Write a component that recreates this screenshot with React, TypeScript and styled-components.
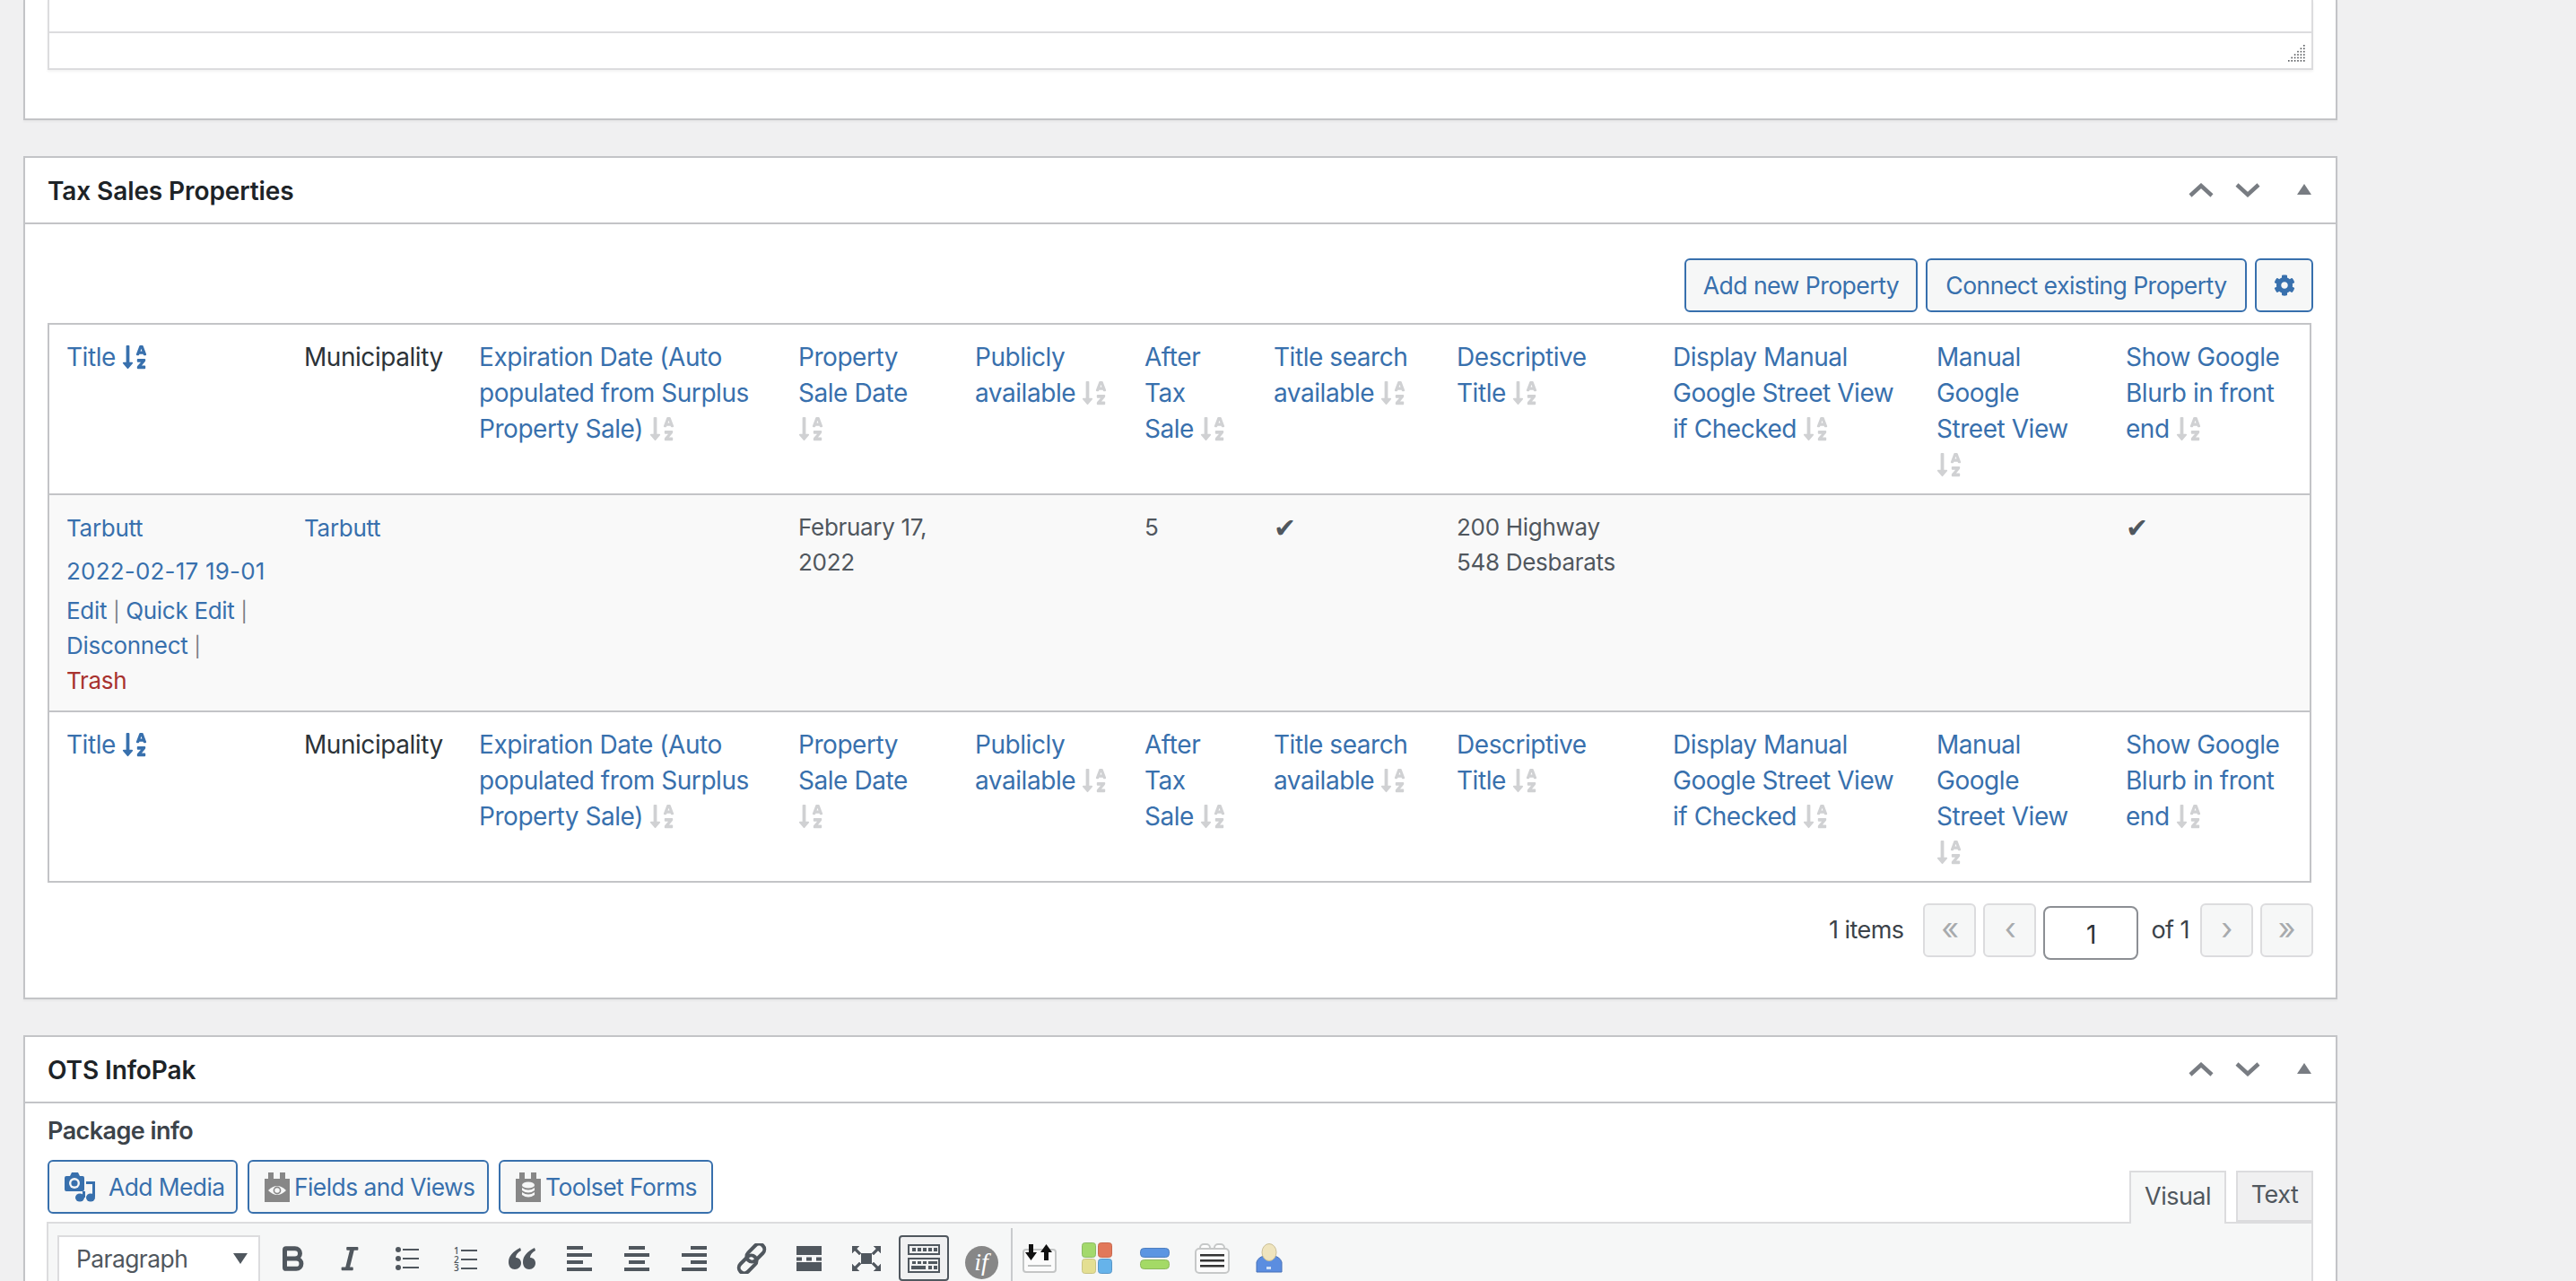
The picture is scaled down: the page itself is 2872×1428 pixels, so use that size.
import React from "react"
import styled, { createGlobalStyle } from "styled-components"
import { FaCog, FaItalic, FaSortAlphaDown } from "react-icons/fa"
import { Bold } from "lucide-react"

const BLUE = "#3870ad"
const FONT = `Inter, "Liberation Sans", sans-serif`

const Global = createGlobalStyle`
  html, body { margin: 0; padding: 0; background: #f0f0f1; overflow: hidden; }
  * { box-sizing: border-box; }
`

const Page = styled.div`
  width: 2872px;
  height: 1428px;
  overflow: hidden;
  padding-left: 26px;
  font-family: ${FONT};
  font-size: 26px;
  letter-spacing: -0.55px;
  color: #3c434a;
`
const Postbox = styled.section<{ $clipped?: boolean }>`
  width: 2580px;
  background: #fff;
  border: 2px solid #c3c4c7;
  border-top-width: ${(p) => (p.$clipped ? 0 : "2px")};
  box-shadow: 0 2px 2px rgba(0, 0, 0, 0.04);
  margin-bottom: 40px;
`
const BoxHeader = styled.header`
  height: 74px;
  display: flex;
  align-items: center;
  padding: 0 27px 0 25px;
  border-bottom: 2px solid #c3c4c7;
`
const BoxTitle = styled.h2`
  flex: 1;
  margin: 0;
  padding-top: 2px;
  font-size: 28px;
  font-weight: 600;
  letter-spacing: -0.1px;
  color: #1d2327;
`
const BoxControl = styled.svg<{ $gap: number }>`
  margin-left: ${(p) => p.$gap}px;
  display: block;
`
const BoxBody = styled.div`
  padding: 0 25px;
`

/* first box, only the bottom of the old editor is visible */
const OldEditor = styled.div`
  margin-bottom: 54px;
  border: 2px solid #dcdcde;
  border-top: 0;
  box-shadow: 0 2px 3px rgba(0, 0, 0, 0.05);
`
const OldEditorArea = styled.div`
  height: 37px;
  border-bottom: 2px solid #dcdcde;
`
const OldEditorStatus = styled.div`
  height: 39px;
  display: flex;
  justify-content: flex-end;
  align-items: flex-end;
  padding: 0 6px 6px 0;
`

const TopActions = styled.div`
  display: flex;
  justify-content: flex-end;
  gap: 9px;
  padding-top: 38px;
  margin-bottom: 12px;
`
const Button = styled.button<{ $width?: number }>`
  height: 60px;
  width: ${(p) => (p.$width ? `${p.$width}px` : "auto")};
  padding: 0;
  display: inline-flex;
  align-items: center;
  justify-content: center;
  background: #f6f7f7;
  border: 2px solid ${BLUE};
  border-radius: 6px;
  color: ${BLUE};
  font-family: ${FONT};
  font-size: 26.6px;
  letter-spacing: -0.55px;
`

const Table = styled.table`
  width: 2524px;
  table-layout: fixed;
  border-collapse: separate;
  border-spacing: 0;
  border: 2px solid #c3c4c7;
`
const Th = styled.th<{ $plain?: boolean; $foot?: boolean }>`
  padding: 16px 20px 12px 19px;
  text-align: left;
  vertical-align: top;
  font-weight: 400;
  font-size: 28px;
  line-height: 40px;
  letter-spacing: -0.45px;
  color: ${(p) => (p.$plain ? "#2c3338" : BLUE)};
  border-bottom: ${(p) => (p.$foot ? "0" : "2px solid #c3c4c7")};
  border-top: ${(p) => (p.$foot ? "2px solid #c3c4c7" : "0")};
`
const Td = styled.td`
  padding: 16px 20px 14px 19px;
  vertical-align: top;
  background: #f9f9f9;
  font-size: 26px;
  line-height: 39px;
  letter-spacing: -0.3px;
  color: #50575e;
`
const RowLink = styled.a<{ $wide?: boolean }>`
  display: block;
  color: ${BLUE};
  font-size: 26px;
  line-height: 42px;
  letter-spacing: ${(p) => (p.$wide ? "0.2px" : "-0.3px")};
  margin-bottom: ${(p) => (p.$wide ? "3px" : "6px")};
`
const Actions = styled.div`
  font-size: 26px;
  line-height: 39px;
`
const ActionLink = styled.a<{ $danger?: boolean }>`
  color: ${(p) => (p.$danger ? "#a8322f" : BLUE)};
`
const ActionSep = styled.span`
  font-size: 22px;
  line-height: 1;
  color: #787c82;
`
const Check = styled.span`
  font-family: "DejaVu Sans", sans-serif;
  font-size: 30px;
  line-height: 1;
  vertical-align: -2px;
  color: #50575e;
`
const SortIcon = styled(FaSortAlphaDown)<{ $active?: boolean; $ownLine?: boolean }>`
  color: ${(p) => (p.$active ? BLUE : "#d0d1d3")};
  vertical-align: -5px;
  margin-left: ${(p) => (p.$ownLine ? "-1px" : "6px")};
`

const Pager = styled.div`
  display: flex;
  justify-content: flex-end;
  align-items: flex-start;
  margin: 23px 0 42px;
  gap: 8px;
`
const PagerText = styled.span<{ $left: number; $right: number }>`
  line-height: 60px;
  font-size: 27px;
  margin: 0 ${(p) => p.$right}px 0 ${(p) => p.$left}px;
  color: #3c434a;
`
const PageButton = styled.div`
  width: 59px;
  height: 60px;
  display: flex;
  align-items: center;
  justify-content: center;
  padding-bottom: 6px;
  background: #f6f7f7;
  border: 2px solid #dcdcde;
  border-radius: 6px;
  color: #a7aaad;
  font-size: 34px;
`
const CurrentPage = styled.div`
  width: 106px;
  height: 60px;
  margin-top: 3px;
  display: flex;
  align-items: center;
  justify-content: center;
  padding-top: 4px;
  background: #fff;
  border: 2px solid #8c8f94;
  border-radius: 8px;
  color: #2c3338;
  font-size: 28px;
`

const PackageLabel = styled.div`
  height: 63px;
  display: flex;
  align-items: center;
  padding-bottom: 2px;
  font-size: 27px;
  font-weight: 600;
  color: #3c434a;
`
const EditorTools = styled.div`
  display: flex;
  justify-content: space-between;
  height: 69px;
`
const MediaButtons = styled.div`
  display: flex;
  gap: 11px;
`
const MediaButton = styled(Button)<{ $gap: number }>`
  padding: 0 0 0 17px;
  justify-content: flex-start;
  font-size: 26.4px;
  gap: ${(p) => p.$gap}px;
`
const Tabs = styled.div`
  display: flex;
  align-items: flex-end;
  gap: 11px;
  align-self: flex-end;
  margin-bottom: -2px;
  position: relative;
`
const Tab = styled.div<{ $active?: boolean }>`
  height: ${(p) => (p.$active ? 59 : 57)}px;
  margin-bottom: ${(p) => (p.$active ? 0 : "2px")};
  padding: 0 18px 4px;
  display: flex;
  align-items: center;
  justify-content: center;
  width: ${(p) => (p.$active ? 108 : 86)}px;
  background: ${(p) => (p.$active ? "#f6f7f7" : "#f0f0f1")};
  border: 2px solid #dcdcde;
  border-bottom: ${(p) => (p.$active ? 0 : "2px solid #dcdcde")};
  color: #50575e;
  font-size: 27px;
`
const Toolbar = styled.div`
  display: flex;
  align-items: flex-start;
  gap: 8px;
  width: 2527px;
  height: 120px;
  margin-left: -1px;
  padding: 13px 10px;
  background: #f6f7f7;
  border: 2px solid #dcdcde;
`
const FormatSelect = styled.div`
  width: 226px;
  height: 60px;
  display: flex;
  justify-content: space-between;
  align-items: center;
  padding: 0 12px 8px 19px;
  background: #fff;
  border: 2px solid #dcdcde;
  color: #50575e;
  font-size: 26.4px;
`
const SelectArrow = styled.span`
  width: 0;
  height: 0;
  border-left: 8px solid transparent;
  border-right: 8px solid transparent;
  border-top: 12px solid #50575e;
`
const ToolButton = styled.div<{ $active?: boolean }>`
  width: 56px;
  height: 51px;
  flex: none;
  display: flex;
  align-items: center;
  justify-content: center;
  color: #50575e;
  background: ${(p) => (p.$active ? "#f0f0f1" : "transparent")};
  border: 2px solid ${(p) => (p.$active ? "#50575e" : "transparent")};
  border-radius: 4px;
`
const ToolSeparator = styled.div`
  width: 2px;
  height: 70px;
  margin: -8px -6px 0 -3px;
  background: #c9cbcd;
  flex: none;
`
const IfBadge = styled.div`
  width: 37px;
  height: 37px;
  margin-top: 9px;
  flex: none;
  display: flex;
  align-items: center;
  justify-content: center;
  border-radius: 50%;
  background: #878787;
  color: #fff;
  font-family: "Liberation Serif", serif;
  font-style: italic;
  font-size: 28px;
  letter-spacing: 0;
`

const UpChevron = () => (
  <BoxControl $gap={0} width="28" height="16" viewBox="0 0 28 16">
    <path d="M2 14 L14 3 L26 14" fill="none" stroke="#787c82" strokeWidth="4.5" />
  </BoxControl>
)
const DownChevron = () => (
  <BoxControl $gap={24} width="28" height="16" viewBox="0 0 28 16">
    <path d="M2 2 L14 13 L26 2" fill="none" stroke="#787c82" strokeWidth="4.5" />
  </BoxControl>
)
const CollapseArrow = () => (
  <BoxControl $gap={41} width="16" height="16" viewBox="0 0 16 16">
    <path d="M8 1 L16 13 L0 13 Z" fill="#787c82" />
  </BoxControl>
)
const BoxControls = () => (
  <>
    <UpChevron />
    <DownChevron />
    <CollapseArrow />
  </>
)

const ResizeGrip = () => (
  <svg width="20" height="20" viewBox="0 0 20 20" fill="#55585c">
    {[0, 1, 2, 3, 4, 5].map((row) =>
      [0, 1, 2, 3, 4, 5].filter((c) => c >= 5 - row).map((c) => (
        <rect key={`${row}-${c}`} x={c * 3.4} y={row * 3.4} width="1.6" height="1.6" />
      ))
    )}
  </svg>
)

const AddMediaIcon = () => (
  <svg width="34" height="33" viewBox="0 0 34 33" fill={BLUE}>
    <path d="M2 4 H6 L8 0 H15 L17 4 H20 Q22 4 22 6 V19 Q22 21 20 21 H2 Q0 21 0 19 V6 Q0 4 2 4 Z" />
    <circle cx="11" cy="12" r="6" fill="#f6f7f7" />
    <circle cx="11" cy="12" r="3.6" />
    <path d="M24 10 H34 V27 H31 V13 H24 Z" />
    <ellipse cx="29" cy="28" rx="5" ry="4.5" />
    <path d="M20 21 H23 V28 H20 Z" />
    <ellipse cx="17" cy="28" rx="5" ry="4.5" />
  </svg>
)
const PluginBlock = ({ children }: { children: React.ReactNode }) => (
  <svg width="28" height="33" viewBox="0 0 28 33">
    <path d="M0 7 H4 V0 H10 V7 H17 V0 H23 V7 H28 V33 H0 Z" fill="#878787" />
    {children}
  </svg>
)
const FieldsIcon = () => (
  <PluginBlock>
    <path d="M4 20 Q14 10 24 20 Q14 30 4 20 Z" fill="#f6f7f7" />
    <circle cx="14" cy="20" r="3.6" fill="none" stroke="#878787" strokeWidth="1.6" />
  </PluginBlock>
)
const FormsIcon = () => (
  <PluginBlock>
    <ellipse cx="14" cy="14" rx="7" ry="3.6" fill="#f6f7f7" />
    <path d="M7 17 Q14 22 21 17 V20 Q14 25 7 20 Z" fill="#f6f7f7" />
    <path d="M7 22 Q14 27 21 22 V25 Q14 30 7 25 Z" fill="#f6f7f7" />
  </PluginBlock>
)

const ULIcon = () => (
  <svg width="26" height="26" viewBox="0 0 26 26" fill="currentColor">
    <circle cx="3" cy="3" r="3" /><circle cx="3" cy="13" r="3" /><circle cx="3" cy="23" r="3" />
    <rect x="8" y="2" width="18" height="2" /><rect x="8" y="12" width="18" height="2" /><rect x="8" y="22" width="18" height="2" />
  </svg>
)
const OLIcon = () => (
  <svg width="28" height="36" viewBox="-2 -4 28 36" fill="currentColor" fontFamily="'Open Sans', sans-serif" fontSize="10" fontWeight="600">
    <text x="0" y="9">1</text><text x="0" y="18.500">2</text><text x="0" y="28">3</text>
    <rect x="8" y="4" width="18" height="2" /><rect x="8" y="14" width="18" height="2" /><rect x="8" y="24" width="18" height="2" />
  </svg>
)
const comma = "M13 0 C5 4 0 9 0 16 C0 21 3 24 7 24 C11 24 14 21 14 17 C14 13 11 11 8 11 C8 8 10 5 14 3 Z"
const QuoteIcon = () => (
  <svg width="30" height="24" viewBox="0 0 30 24" fill="currentColor">
    <path d={comma} />
    <path d={comma} transform="translate(16 0)" />
  </svg>
)
const AlignIcon = ({ short }: { short: number }) => (
  <svg width="28" height="28" viewBox="0 0 28 28" fill="currentColor">
    <rect x={short} y="0" width="18" height="4" />
    <rect x="0" y="8" width="28" height="4" />
    <rect x={short} y="16" width="18" height="4" />
    <rect x="0" y="24" width="28" height="4" />
  </svg>
)
const LinkIcon = () => (
  <svg width="34" height="34" viewBox="0 0 34 34" fill="none" stroke="currentColor" strokeWidth="4">
    <rect x="15" y="-1" width="12" height="23" rx="6" transform="rotate(45 21 11)" />
    <rect x="7" y="12" width="12" height="23" rx="6" transform="rotate(45 13 23)" />
  </svg>
)
const MoreIcon = () => (
  <svg width="28" height="28" viewBox="0 0 28 28" fill="currentColor">
    <rect width="28" height="10" />
    <rect y="12.5" width="6" height="4" /><rect x="11" y="12.5" width="6" height="4" /><rect x="22" y="12.5" width="6" height="4" />
    <rect y="18" width="28" height="10" />
  </svg>
)
const FullscreenIcon = () => (
  <svg width="32" height="28" viewBox="0 0 32 28" fill="currentColor" stroke="currentColor">
    <rect x="10" y="8" width="12" height="12" stroke="none" />
    <path d="M0 0 H8 L5 3 L10 8 L8 10 L3 5 L0 8 Z" strokeWidth="0.5" />
    <path d="M32 0 H24 L27 3 L22 8 L24 10 L29 5 L32 8 Z" strokeWidth="0.5" />
    <path d="M0 28 H8 L5 25 L10 20 L8 18 L3 23 L0 20 Z" strokeWidth="0.5" />
    <path d="M32 28 H24 L27 25 L22 20 L24 18 L29 23 L32 20 Z" strokeWidth="0.5" />
  </svg>
)
const KitchenSinkIcon = () => (
  <svg width="36" height="32" viewBox="0 0 36 32" fill="currentColor">
    <path fillRule="evenodd" d="M0 0 H36 V12 H0 Z M2 2 V10 H34 V2 Z" />
    {[5, 11, 17, 23, 29].map((x) => <rect key={x} x={x} y="4" width="4" height="4" />)}
    <path fillRule="evenodd" d="M0 15 H36 V32 H0 Z M2 17 V30 H34 V17 Z" />
    {[5, 11, 17].map((x) => <rect key={x} x={x} y="19" width="4" height="3" />)}
    <rect x="23" y="19" width="10" height="3" />
    <rect x="4" y="24" width="16" height="4" />
    <rect x="23" y="24" width="4" height="4" />
    <rect x="29" y="24" width="4" height="4" />
  </svg>
)
const ImportIcon = () => (
  <svg width="38" height="32" viewBox="0 0 38 32">
    <rect x="1" y="6" width="36" height="25" rx="3" fill="#fbfbfb" stroke="#c4c6c6" strokeWidth="2" />
    <rect x="6" y="23" width="26" height="2" fill="#bdbfbf" />
    <path d="M7 0 H12 V9 H16 L9.5 18 L3 9 H7 Z" fill="#111" />
    <path d="M24 18 H29 V9 H33 L26.500 0 L20 9 H24 Z" fill="#111" />
  </svg>
)
const GridIcon = () => (
  <svg width="35" height="35" viewBox="0 0 35 35" strokeWidth="1">
    <rect x="0.500" y="0.500" width="15" height="16" rx="3" fill="#a3d96c" stroke="#8cba66" />
    <rect x="18.500" y="0.500" width="15" height="16" rx="3" fill="#e2785a" stroke="#c8694f" />
    <rect x="0.500" y="18.500" width="15" height="16" rx="3" fill="#e4df92" stroke="#c8c483" />
    <rect x="18.500" y="18.500" width="15" height="16" rx="3" fill="#66b3ea" stroke="#5896c7" />
  </svg>
)
const BarsIcon = () => (
  <svg width="33" height="24" viewBox="0 0 33 24">
    <rect x="0.500" y="0.500" width="32" height="10" rx="4" fill="#5b95e2" stroke="#4f7fbf" />
    <rect x="0.500" y="13.500" width="32" height="10" rx="4" fill="#a4da66" stroke="#8cb85c" />
  </svg>
)
const NotesIcon = () => (
  <svg width="39" height="34" viewBox="0 0 39 34">
    <rect x="6" y="1" width="11" height="10" rx="4" fill="#fff" stroke="#c6c8c8" strokeWidth="2" />
    <rect x="22" y="1" width="11" height="10" rx="4" fill="#fff" stroke="#c6c8c8" strokeWidth="2" />
    <rect x="1" y="6" width="37" height="27" rx="4" fill="#fbfbfb" stroke="#c6c8c8" strokeWidth="2" />
    <rect x="6" y="12" width="27" height="2.500" fill="#333" />
    <rect x="6" y="18" width="27" height="2.500" fill="#333" />
    <rect x="6" y="24" width="27" height="2.500" fill="#333" />
  </svg>
)
const UserIcon = () => (
  <svg width="30" height="33" viewBox="0 0 30 33">
    <path d="M1 32 V21 Q3 15 10 14 H20 Q27 15 29 21 V32 Z" fill="#5b8de0" stroke="#4670b8" />
    <ellipse cx="15" cy="10" rx="8" ry="9.500" fill="#efe4bd" stroke="#cbbf96" />
    <rect x="12" y="26" width="5" height="3" fill="#cfe0f7" />
  </svg>
)

type Column = { width: number; lines: string[]; plain?: boolean; sortOnOwnLine?: boolean; active?: boolean }

const columns: Column[] = [
  { width: 265, lines: ["Title"], active: true },
  { width: 195, lines: ["Municipality"], plain: true },
  { width: 356, lines: ["Expiration Date (Auto", "populated from Surplus", "Property Sale)"] },
  { width: 197, lines: ["Property", "Sale Date"], sortOnOwnLine: true },
  { width: 189, lines: ["Publicly", "available"] },
  { width: 144, lines: ["After", "Tax", "Sale"] },
  { width: 204, lines: ["Title search", "available"] },
  { width: 241, lines: ["Descriptive", "Title"] },
  { width: 294, lines: ["Display Manual", "Google Street View", "if Checked"] },
  { width: 211, lines: ["Manual", "Google", "Street View"], sortOnOwnLine: true },
  { width: 224, lines: ["Show Google", "Blurb in front", "end"] },
]

const HeaderCells = ({ foot }: { foot?: boolean }) => (
  <tr>
    {columns.map((col) => (
      <Th key={col.lines[0]} $plain={col.plain} $foot={foot}>
        {col.lines.map((line, i) => (
          <React.Fragment key={line}>
            {i > 0 && <br />}
            {line}
          </React.Fragment>
        ))}
        {col.sortOnOwnLine && <br />}
        {!col.plain && <SortIcon size={30} $active={col.active} $ownLine={col.sortOnOwnLine} />}
      </Th>
    ))}
  </tr>
)

const App: React.FC = () => {
  return (
    <Page>
      <Global />

      <Postbox $clipped>
        <BoxBody>
          <OldEditor>
            <OldEditorArea />
            <OldEditorStatus>
              <ResizeGrip />
            </OldEditorStatus>
          </OldEditor>
        </BoxBody>
      </Postbox>

      <Postbox>
        <BoxHeader>
          <BoxTitle>Tax Sales Properties</BoxTitle>
          <BoxControls />
        </BoxHeader>
        <BoxBody>
          <TopActions>
            <Button $width={260}>Add new Property</Button>
            <Button $width={358}>Connect existing Property</Button>
            <Button $width={65}><FaCog size={24} /></Button>
          </TopActions>
          <Table>
            <colgroup>
              {columns.map((col) => <col key={col.lines[0]} width={col.width} />)}
            </colgroup>
            <thead>
              <HeaderCells />
            </thead>
            <tbody>
              <tr>
                <Td>
                  <RowLink>Tarbutt</RowLink>
                  <RowLink $wide>2022-02-17 19-01</RowLink>
                  <Actions>
                    <ActionLink>Edit</ActionLink> <ActionSep>|</ActionSep> <ActionLink>Quick Edit</ActionLink> <ActionSep>|</ActionSep><br />
                    <ActionLink>Disconnect</ActionLink> <ActionSep>|</ActionSep><br />
                    <ActionLink $danger>Trash</ActionLink>
                  </Actions>
                </Td>
                <Td><RowLink>Tarbutt</RowLink></Td>
                <Td />
                <Td>February 17,<br />2022</Td>
                <Td />
                <Td>5</Td>
                <Td><Check>✔</Check></Td>
                <Td>200 Highway<br />548 Desbarats</Td>
                <Td />
                <Td />
                <Td><Check>✔</Check></Td>
              </tr>
            </tbody>
            <tfoot>
              <HeaderCells foot />
            </tfoot>
          </Table>
          <Pager>
            <PagerText $left={0} $right={14}>1 items</PagerText>
            <PageButton>«</PageButton>
            <PageButton>‹</PageButton>
            <CurrentPage>1</CurrentPage>
            <PagerText $left={6} $right={4}>of 1</PagerText>
            <PageButton>›</PageButton>
            <PageButton>»</PageButton>
          </Pager>
        </BoxBody>
      </Postbox>

      <Postbox>
        <BoxHeader>
          <BoxTitle>OTS InfoPak</BoxTitle>
          <BoxControls />
        </BoxHeader>
        <BoxBody>
          <PackageLabel>Package info</PackageLabel>
          <EditorTools>
            <MediaButtons>
              <MediaButton $width={212} $gap={15}><AddMediaIcon />Add Media</MediaButton>
              <MediaButton $width={269} $gap={5}><FieldsIcon />Fields and Views</MediaButton>
              <MediaButton $width={239} $gap={5}><FormsIcon />Toolset Forms</MediaButton>
            </MediaButtons>
            <Tabs>
              <Tab $active>Visual</Tab>
              <Tab>Text</Tab>
            </Tabs>
          </EditorTools>
          <Toolbar>
            <FormatSelect>Paragraph<SelectArrow /></FormatSelect>
            <ToolButton><Bold size={34} strokeWidth={3.5} /></ToolButton>
            <ToolButton><FaItalic size={30} /></ToolButton>
            <ToolButton><ULIcon /></ToolButton>
            <ToolButton><OLIcon /></ToolButton>
            <ToolButton><QuoteIcon /></ToolButton>
            <ToolButton><AlignIcon short={0} /></ToolButton>
            <ToolButton><AlignIcon short={5} /></ToolButton>
            <ToolButton><AlignIcon short={10} /></ToolButton>
            <ToolButton><LinkIcon /></ToolButton>
            <ToolButton><MoreIcon /></ToolButton>
            <ToolButton><FullscreenIcon /></ToolButton>
            <ToolButton $active><KitchenSinkIcon /></ToolButton>
            <ToolButton><IfBadge>if</IfBadge></ToolButton>
            <ToolSeparator />
            <ToolButton><ImportIcon /></ToolButton>
            <ToolButton><GridIcon /></ToolButton>
            <ToolButton><BarsIcon /></ToolButton>
            <ToolButton><NotesIcon /></ToolButton>
            <ToolButton><UserIcon /></ToolButton>
          </Toolbar>
        </BoxBody>
      </Postbox>
    </Page>
  )
}

export default App
